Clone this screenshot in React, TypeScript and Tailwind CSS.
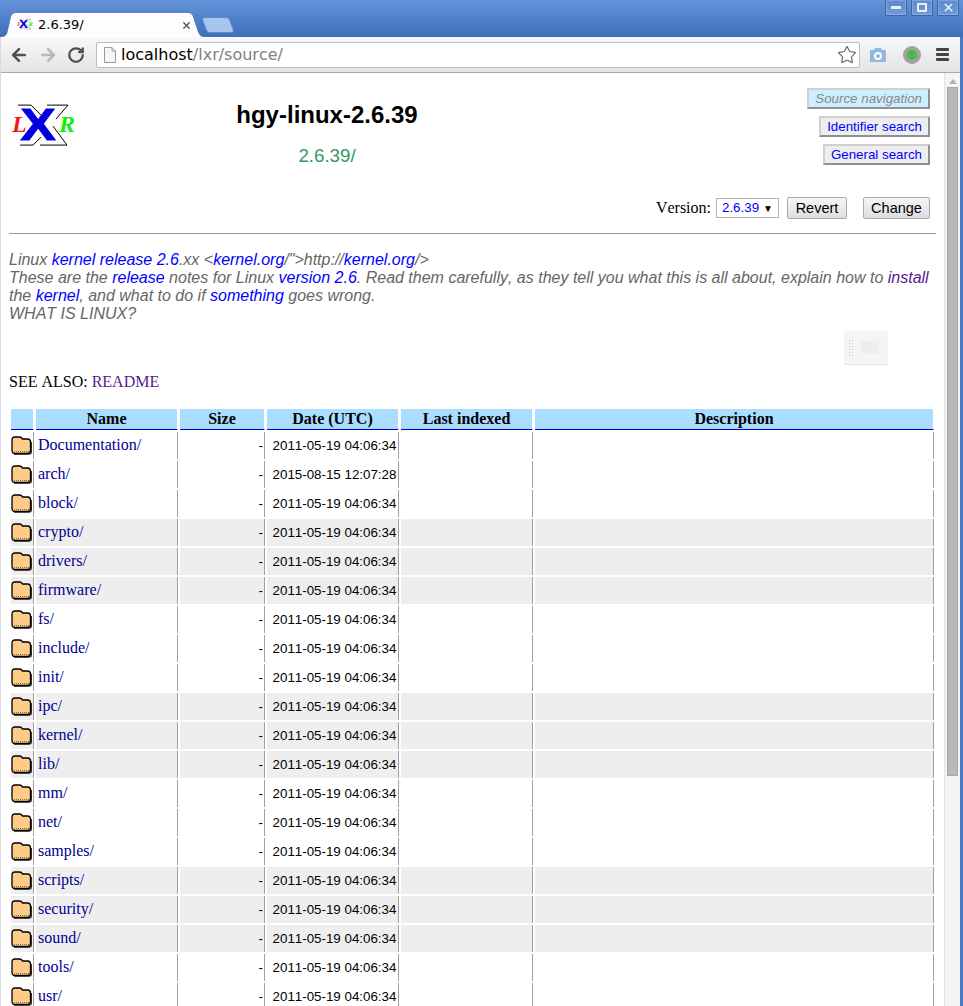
import React from 'react';
import { ArrowLeft, ArrowRight, RotateCw, Star, X } from 'lucide-react';

const SANS = 'font-["Liberation_Sans",Arial,sans-serif]';

const dirs: { name: string; date?: string }[] = [
  { name: 'Documentation' },
  { name: 'arch', date: '2015-08-15 12:07:28' },
  { name: 'block' },
  { name: 'crypto' },
  { name: 'drivers' },
  { name: 'firmware' },
  { name: 'fs' },
  { name: 'include' },
  { name: 'init' },
  { name: 'ipc' },
  { name: 'kernel' },
  { name: 'lib' },
  { name: 'mm' },
  { name: 'net' },
  { name: 'samples' },
  { name: 'scripts' },
  { name: 'security' },
  { name: 'sound' },
  { name: 'tools' },
  { name: 'usr' },
];

const Folder = () => (
  <svg width="21" height="19" viewBox="0 0 21 19" className="block">
    <path d="M3 18.2 H18 Q20.4 18.2 20.4 16 V6" fill="none" stroke="#333" strokeWidth="1.2" />
    <path
      d="M1 4 Q1 1 4 1 H8.5 Q10.5 1 11.5 3 H16.5 Q19.5 3 19.5 6 V14.5 Q19.5 17.5 16.5 17.5 H4 Q1 17.5 1 14.5 Z"
      fill="#ffcc88"
      stroke="#000"
      strokeWidth="1.3"
    />
    <path d="M3 15.5 H18.5" stroke="#8a6a3a" strokeWidth="1" strokeDasharray="1 1" />
  </svg>
);

const LxrLogo = ({ size = 66 }: { size?: number }) => (
  <svg width={size} height={size * 0.7} viewBox="0 0 66 46" className="block overflow-visible">
    <path
      d="M7 1 H20 L32 13 M36 1 H57 L45 15 M9 41 H22 L30 33 M29 41 H56 L42 22"
      stroke="#000"
      strokeWidth="1"
      fill="none"
    />
    <text
      transform="translate(27 36) scale(1.2 1)"
      textAnchor="middle"
      fontFamily="Liberation Sans"
      fontWeight="700"
      fontSize="44"
      fill="#0000dd"
      stroke="#0000dd"
      strokeWidth="1"
    >
      X
    </text>
    <text x="1" y="28" fontFamily="Liberation Serif" fontStyle="italic" fontWeight="700" fontSize="24" fill="#f01818">
      L
    </text>
    <text x="48" y="28" fontFamily="Liberation Serif" fontStyle="italic" fontWeight="700" fontSize="24" fill="#10ee10">
      R
    </text>
  </svg>
);

const WinButton = ({ children, w }: { children: React.ReactNode; w: string }) => (
  <div className={`${w} h-4 rounded-b-[2px] border border-t-0 border-[#3a66a8] bg-gradient-to-b from-[#5c8ad0] to-[#6f9ad8] flex items-center justify-center shadow-[inset_0_0_0_1px_rgba(255,255,255,0.2)]`}>
    {children}
  </div>
);

const NavTab = ({ children, active }: { children: React.ReactNode; active?: boolean }) => (
  <span
    className={`inline-block h-[21px] px-[6px] leading-[18px] text-[13.33px] border-2 border-t-[#cfcfcf] border-l-[#cfcfcf] border-b-[#8f8f8f] border-r-[#8f8f8f] ${
      active ? 'bg-[#cceeff] text-[#888888] italic' : 'bg-[#eeeeee] text-[#0000ff]'
    }`}
  >
    {children}
  </span>
);

const Btn = ({ children, w }: { children: React.ReactNode; w: string }) => (
  <button className={`${w} h-[22px] text-[14.5px] leading-none text-black rounded-[2px] border border-[#a8a8a8] bg-gradient-to-b from-[#f6f6f6] to-[#dedede]`}>
    {children}
  </button>
);

export default function App() {
  return (
    <div className={`w-[963px] h-[1006px] overflow-hidden flex flex-col bg-[#4a78c4] [font-kerning:none] ${SANS}`}>
      {/* window frame and tab strip */}
      <div className="h-[37px] shrink-0 flex items-end justify-between bg-gradient-to-b from-[#6493da] to-[#3f6fba]">
        <div className="flex items-end pl-[2px]">
          <div className="relative w-[202px] h-[24px]">
            <svg width="202" height="24" viewBox="0 0 202 24" className="absolute inset-0">
              <path
                d="M0 24 Q5 24 6 17 L9 4 Q10 0 14 0 L186 0 Q190 0 191 4 L196 19 Q198 24 202 24 Z"
                fill="#fdfdfd"
              />
            </svg>
            <div className="relative flex items-center h-full pl-[15px] pr-[12px]">
              <LxrLogo size={16} />
              <span className='ml-[5px] text-[13px] text-black font-["DejaVu_Sans",sans-serif]'>2.6.39/</span>
              <X size={11} strokeWidth={3} className="ml-auto text-[#555555]" />
            </div>
          </div>
          <div className="w-[28px] h-[16px] mb-[4px] rounded-[3px] skew-x-[20deg] bg-[#a6c6f0] border border-[#5f8bcb]" />
        </div>
        <div className="self-start flex gap-[4px] pr-[4px]">
          <WinButton w="w-[22px]">
            <div className="w-[10px] h-[3px] bg-white/85" />
          </WinButton>
          <WinButton w="w-[22px]">
            <div className="w-[10px] h-[9px] border-2 border-white/85 rounded-[1px]" />
          </WinButton>
          <WinButton w="w-[22px]">
            <X size={13} strokeWidth={2.5} className="text-white/90" />
          </WinButton>
        </div>
      </div>

      {/* browser toolbar */}
      <div className="flex-1 min-h-0 flex flex-col border-l border-[#d8dce2] mr-[3px] bg-white">
        <div className="h-[36px] shrink-0 flex items-center border-b border-[#a9a9a9] bg-gradient-to-b from-[#f8f8f8] to-[#e4e4e4]">
          <div className="w-[95px] shrink-0 flex items-center pl-[8px] gap-[9px]">
            <ArrowLeft size={20} strokeWidth={3} className="text-[#505050]" />
            <ArrowRight size={20} strokeWidth={3} className="text-[#b8b8b8]" />
            <RotateCw size={18} strokeWidth={3} className="text-[#505050]" />
          </div>
          <div className="w-[764px] h-[26px] shrink-0 flex items-center rounded-[2px] border border-[#bcbcbc] bg-white pl-[7px] pr-[2px]">
            <svg width="12" height="16" viewBox="0 0 12 16" className="shrink-0">
              <path d="M.5.5 H8 L11.5 4 V15.5 H.5 Z" fill="#f7f7f7" stroke="#9a9a9a" />
              <path d="M8 .5 V4 H11.5" fill="none" stroke="#9a9a9a" />
            </svg>
            <span className='ml-[5px] text-[16px] font-["DejaVu_Sans",sans-serif] text-black'>
              localhost<span className="text-[#808080]">/lxr/source/</span>
            </span>
            <Star size={20} strokeWidth={1.4} className="ml-auto text-[#666666]" />
          </div>
          <div className="flex-1 flex items-center pl-[9px] pr-[11px] justify-between">
            <svg width="18" height="16" viewBox="0 0 18 16">
              <path d="M1 3 H5 L6 1 H12 L13 3 H17 V15 H1 Z" fill="#8fb8dc" />
              <circle cx="9" cy="9" r="4" fill="#fff" />
              <circle cx="9" cy="9" r="2" fill="#8fb8dc" />
            </svg>
            <div className="w-[18px] h-[18px] rounded-full bg-[#a2a2a2] flex items-center justify-center">
              <div className="w-[10px] h-[10px] rounded-full bg-[#4cb84c]" />
            </div>
            <div className="w-[13px] flex flex-col gap-[2px]">
              <div className="h-[3px] rounded-[1px] bg-[#444444]" />
              <div className="h-[3px] rounded-[1px] bg-[#444444]" />
              <div className="h-[3px] rounded-[1px] bg-[#444444]" />
            </div>
          </div>
        </div>

        {/* page and its scrollbar */}
        <div className="flex-1 min-h-0 flex">
          <div className="relative flex-1 min-w-0 overflow-hidden px-[8px]">
            <div className="flex h-[104px] pt-[15px]">
              <div className="w-[100px] pl-[2px] pt-[16px]">
                <LxrLogo />
              </div>
              <div className="w-[436px] text-center">
                <h1 className="mt-[13px] text-[24px] leading-[28px] font-bold text-black">hgy-linux-2.6.39</h1>
                <div className="mt-[16px] text-[18.72px] leading-[21px] text-[#339966]">2.6.39/</div>
              </div>
              <div className="flex-1 flex flex-col items-end gap-[7px] pr-[6px]">
                <NavTab active>Source navigation</NavTab>
                <NavTab>Identifier search</NavTab>
                <NavTab>General search</NavTab>
              </div>
            </div>

            <div className="flex items-center justify-end h-[22px] mt-[20px] pr-[6px]">
              <span className="font-['Liberation_Serif',serif] text-[16px] text-black">Version:</span>
              <div className="ml-[5px] w-[63px] h-[20px] flex items-center justify-between px-[5px] border border-[#b4b4b4] bg-white text-[13.33px] text-[#0000ff]">
                2.6.39
                <span className="text-[10px] text-black">▼</span>
              </div>
              <div className="ml-[8px]">
                <Btn w="w-[60px]">Revert</Btn>
              </div>
              <div className="ml-[16px]">
                <Btn w="w-[67px]">Change</Btn>
              </div>
            </div>

            <hr className="mt-[14px] border-0 border-t border-[#999999]" />

            <div className="mt-[17px] text-[16px] leading-[18px] italic text-[#666666]">
              Linux <a className="text-[#0000ff]">kernel</a> <a className="text-[#0000ff]">release 2.6</a>.xx &lt;
              <a className="text-[#0000ff]">kernel.org</a>/"&gt;http://<a className="text-[#0000ff]">kernel.org</a>/&gt;
              <br />
              These are the <a className="text-[#0000ff]">release</a> notes for Linux{' '}
              <a className="text-[#0000ff]">version 2.6</a>. Read them carefully, as they tell you what this is all about,
              explain how to <a className="text-[#551a8b]">install</a> the <a className="text-[#0000ff]">kernel</a>, and
              what to do if <a className="text-[#0000ff]">something</a> goes wrong.
              <br />
              WHAT IS LINUX?
            </div>

            <div className="mt-[50px] font-['Liberation_Serif',serif] text-[16px] leading-[18px] text-black">
              SEE ALSO: <a className="text-[#551a8b]">README</a>
            </div>

            {/* faded keyboard widget sitting over the page */}
            <div className="absolute left-[843px] top-[258px] w-[44px] h-[34px] flex items-center gap-[8px] pl-[5px] bg-[#f5f5f3] border-b border-[#e2e2e2]">
              <div className="grid grid-cols-2 gap-x-[2px] gap-y-[2px]">
                {Array.from({ length: 12 }, (_, i) => (
                  <div key={i} className="w-[1px] h-[1px] bg-[#c8c8c8]" />
                ))}
              </div>
              <div className="w-[18px] h-[13px] rounded-[2px] bg-[#eeeeec]" />
            </div>

            <table className="mt-[16px] table-fixed border-separate border-spacing-[2px] w-[927px]">
              <colgroup>
                <col className="w-[23px]" />
                <col className="w-[142px]" />
                <col className="w-[85px]" />
                <col className="w-[132px]" />
                <col className="w-[132px]" />
                <col className="w-[399px]" />
              </colgroup>
              <thead>
                <tr className="font-['Liberation_Serif',serif] text-[16px] text-black">
                  {['', 'Name', 'Size', 'Date (UTC)', 'Last indexed', 'Description'].map((h) => (
                    <th key={h} className="h-[21px] p-0 leading-[18px] font-bold bg-[#aaddff] border-b border-r border-b-[#0000cc] border-r-white">
                      {h}
                    </th>
                  ))}
                </tr>
              </thead>
              <tbody>
                {dirs.map((d, i) => {
                  const cell = `h-[27px] p-0 border-r border-[#a0a0a0] ${i % 6 >= 3 ? 'bg-[#eeeeee]' : 'bg-white'}`;
                  return (
                    <tr key={d.name}>
                      <td className={cell}>
                        <Folder />
                      </td>
                      <td className={`${cell} pl-[2px] pb-[1px] font-['Liberation_Serif',serif] text-[16px] text-[#000090]`}>
                        {d.name}/
                      </td>
                      <td className={`${cell} pr-[1px] text-right text-[13.33px] text-black`}>-</td>
                      <td className={`${cell} pl-[4px] text-center text-[13.33px] text-black`}>{d.date ?? '2011-05-19 04:06:34'}</td>
                      <td className={cell} />
                      <td className={cell} />
                    </tr>
                  );
                })}
              </tbody>
            </table>
          </div>

          <div className="w-[16px] shrink-0 flex flex-col items-center border-l border-[#e4e4e4] bg-[#f4f4f4]">
            <div className="mt-[6px] w-0 h-0 border-x-[4px] border-x-transparent border-b-[5px] border-b-[#b0b0b0]" />
            <div className="mt-[3px] w-[11px] h-[689px] bg-[#b8b8b8] border border-[#a8a8a8]" />
          </div>
        </div>
      </div>
    </div>
  );
}
